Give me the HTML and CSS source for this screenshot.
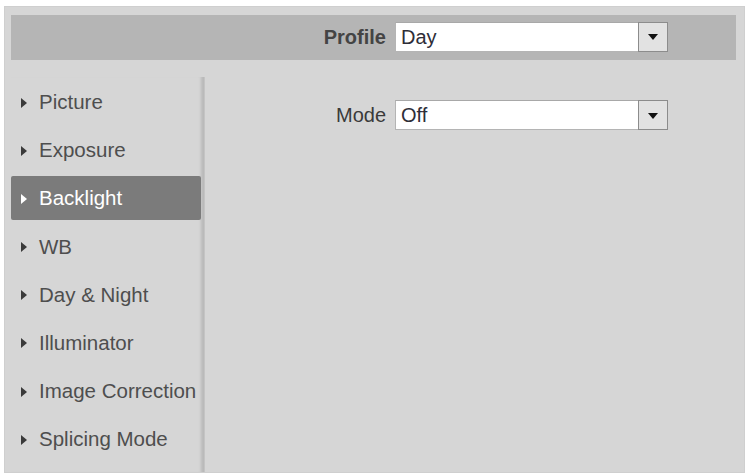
FILE: index.html
```html
<!DOCTYPE html>
<html>
<head>
<meta charset="utf-8">
<link rel="stylesheet" href="styles.css">
</head>
<body>
<div class="panel">
  <div class="header">
    <div class="label bold">Profile</div>
    <div class="select"><span class="val">Day</span><span class="btn"><span class="arrow"></span></span></div>
  </div>
  <div class="body">
    <ul class="menu">
      <li class="item">Picture</li>
      <li class="item">Exposure</li>
      <li class="item active">Backlight</li>
      <li class="item">WB</li>
      <li class="item">Day &amp; Night</li>
      <li class="item">Illuminator</li>
      <li class="item">Image Correction</li>
      <li class="item">Splicing Mode</li>
    </ul>
    <div class="main">
      <div class="row">
        <div class="label">Mode</div>
        <div class="select"><span class="val">Off</span><span class="btn"><span class="arrow"></span></span></div>
      </div>
    </div>
  </div>
</div>
</body>
</html>
```

FILE: styles.css
```css
* { box-sizing: border-box; }
html, body { margin: 0; padding: 0; background: #ffffff; }
body {
  font-family: "Liberation Sans", Arial, sans-serif;
  font-size: 20px;
  width: 748px;
  height: 476px;
  overflow: hidden;
}
.panel {
  margin: 6px 0 0 4px;
  width: 741px;
  height: 467px;
  background: #d6d6d6;
  border: 1px solid #cfcfcf;
  padding: 8px 8px 0 6px;
  display: flex;
  flex-direction: column;
}
.header {
  height: 45px;
  background: #b5b5b5;
  display: grid;
  grid-template-columns: 375px 273px;
  column-gap: 9px;
  align-items: center;
  padding-bottom: 2px;
}
.label {
  text-align: right;
  color: #3a3a3a;
  line-height: 24px;
}
.bold { font-weight: bold; color: #444; }
.select {
  height: 30px;
  background: #ffffff;
  border: 1px solid #b4b4b4;
  border-top-color: #a8a8a8;
  display: flex;
  align-items: stretch;
}
.val {
  flex: 1;
  padding-left: 5px;
  line-height: 28px;
  color: #2e2e38;
}
.btn {
  width: 30px;
  background: #e2e2e2;
  border: 1px solid #8c8c8c;
  margin: -1px -1px -1px 0;
  display: flex;
  align-items: center;
  justify-content: center;
}
.arrow {
  width: 0;
  height: 0;
  border-left: 5px solid transparent;
  border-right: 5px solid transparent;
  border-top: 6px solid #111;
  margin-top: 1px;
}
.body {
  flex: 1;
  display: flex;
  margin-top: 17px;
}
.menu {
  list-style: none;
  margin: 0;
  padding: 3px 0 0 0;
  width: 194px;
  border-right: 1px solid #c4c4c4;
  box-shadow: inset -5px 0 3px -2px #b9b9b9;
}
.item {
  height: 44px;
  margin-bottom: 4.2px;
  width: 190px;
  display: flex;
  align-items: center;
  padding-left: 10px;
  color: #4e4e4e;
  font-size: 20.5px;
  border-radius: 2px;
}
.item::before {
  content: "";
  width: 0;
  height: 0;
  border-top: 5px solid transparent;
  border-bottom: 5px solid transparent;
  border-left: 6px solid #3a3a3a;
  margin-right: 12px;
  margin-top: 1px;
}
.item.active {
  background: #7b7b7b;
  color: #ffffff;
}
.item.active::before { border-left-color: #ffffff; }
.main {
  flex: 1;
  padding-top: 23px;
}
.row {
  display: grid;
  grid-template-columns: 181px 273px;
  column-gap: 9px;
  align-items: center;
}
```
